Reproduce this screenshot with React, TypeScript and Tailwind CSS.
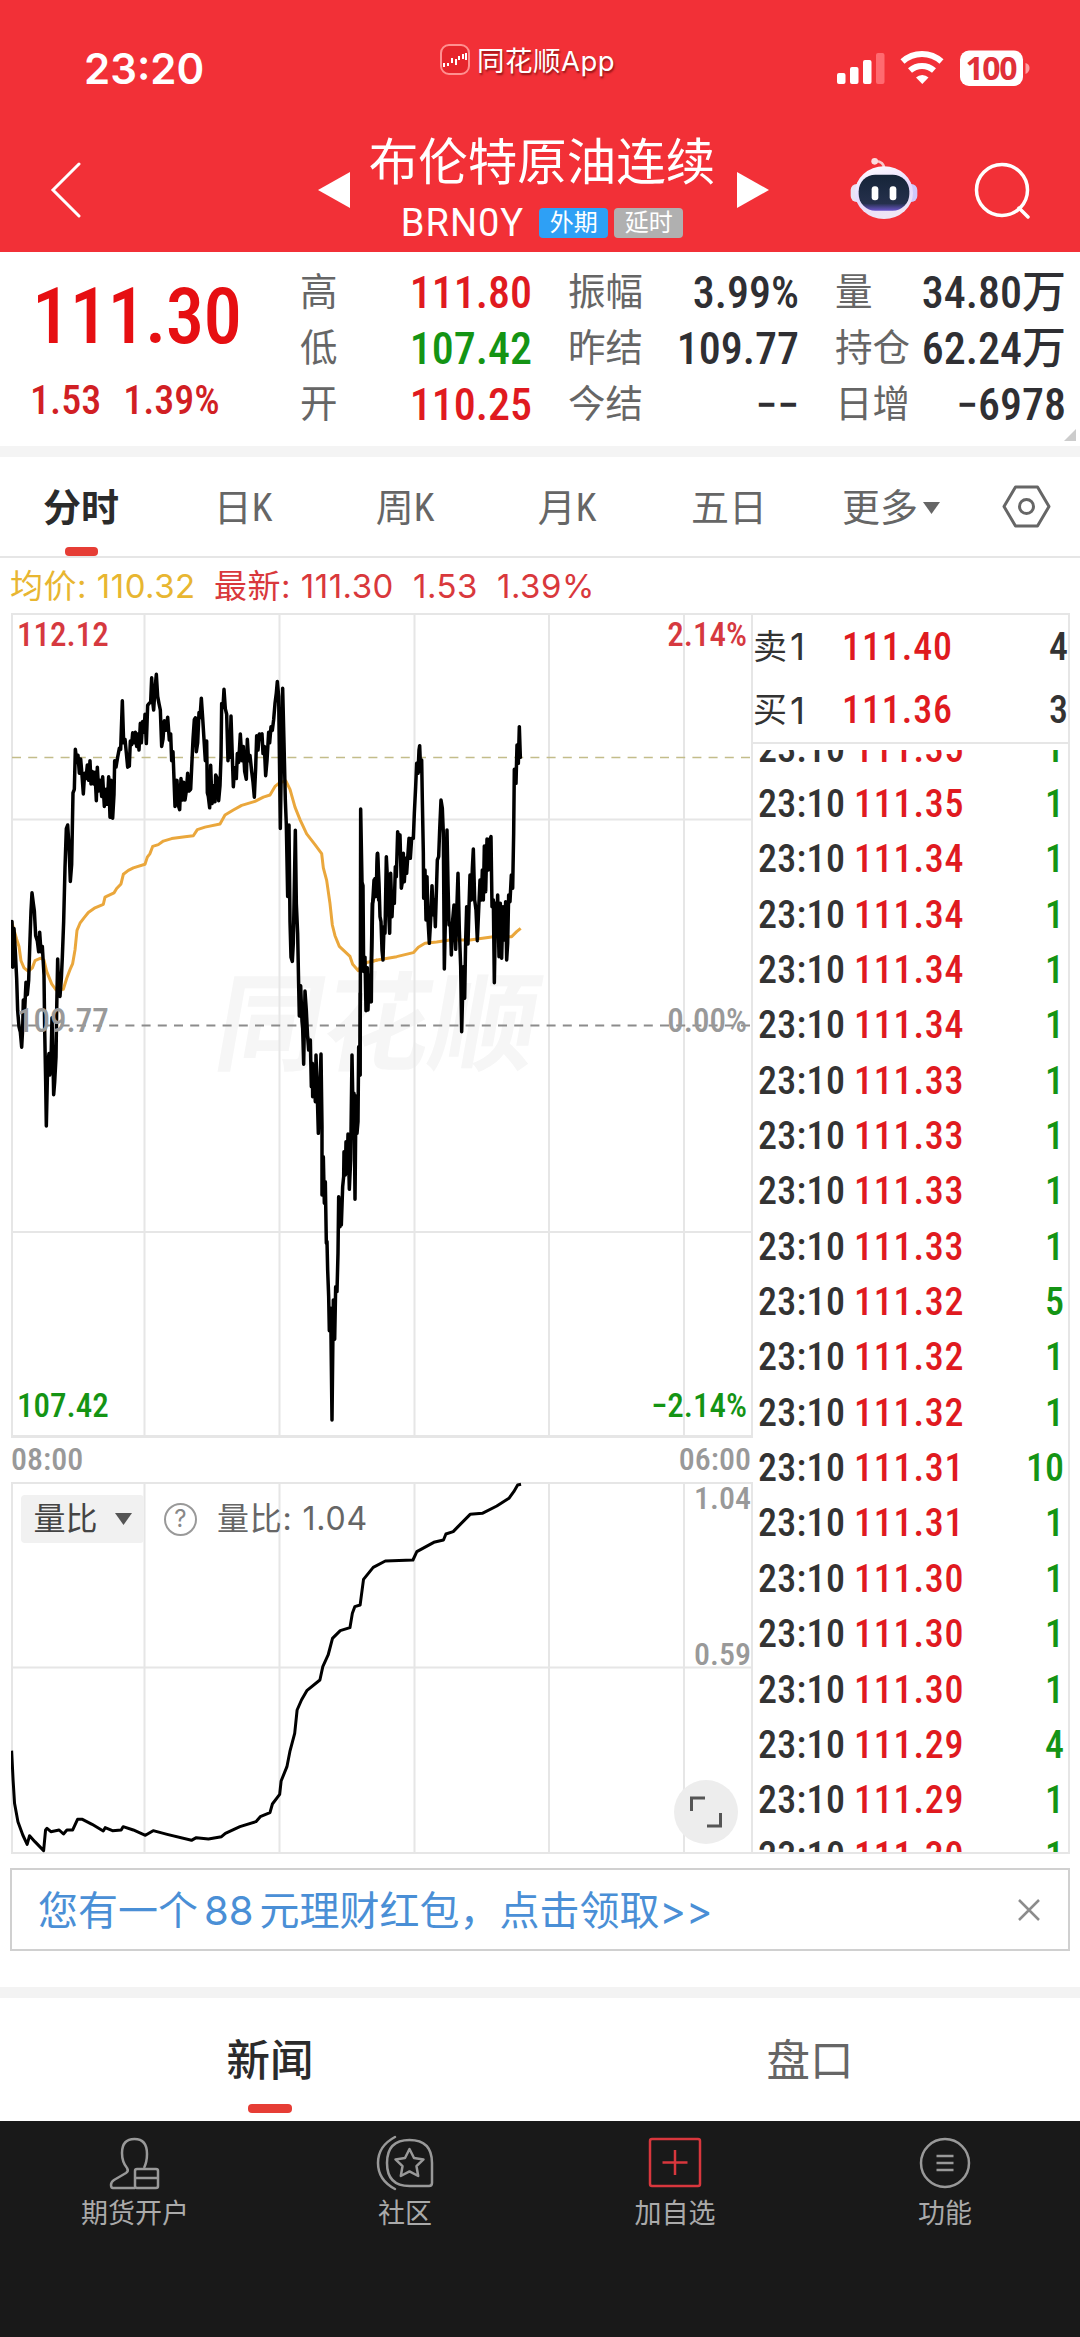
import { Fragment } from "react";

const STATS = [
	[
		["高", "111.80", "text-[#e01a1f]"],
		["低", "107.42", "text-[#149414]"],
		["开", "110.25", "text-[#e01a1f]"],
	],
	[
		["振幅", "3.99%", "text-[#2f2f33]"],
		["昨结", "109.77", "text-[#2f2f33]"],
		["今结", "−−", "text-[#2f2f33]"],
	],
	[
		["量", "34.80万", "text-[#2f2f33]"],
		["持仓", "62.24万", "text-[#2f2f33]"],
		["日增", "−6978", "text-[#2f2f33]"],
	],
];

const PERIODS = ["分时", "日K", "周K", "月K", "五日", "更多"];

const TICKS: [string, number][] = [
	["111.35", 1],
	["111.35", 1],
	["111.34", 1],
	["111.34", 1],
	["111.34", 1],
	["111.34", 1],
	["111.33", 1],
	["111.33", 1],
	["111.33", 1],
	["111.33", 1],
	["111.32", 5],
	["111.32", 1],
	["111.32", 1],
	["111.31", 10],
	["111.31", 1],
	["111.30", 1],
	["111.30", 1],
	["111.30", 1],
	["111.29", 4],
	["111.29", 1],
	["111.30", 1],
];

// each part of the session has its own origin and scale
const PRICE = [
	{
		transform: "translate(0 600) scale(0.33333 0.35714)",
		points:
			"36,900 38,1028 42,920 46,985 50,1060 53,1150 57,1195 61,1210 65,1252 68,1200 70,1120 74,1150 78,1070 82,1105 86,1065 90,950 93,870 96,820 100,850 103,870 107,940 112,955 116,985 119,930 123,985 127,970 132,1050 134,1200 137,1350 139,1473 143,1300 147,1270 149,1330 153,1290 156,1170 159,1290 161,1385 164,1350 168,1280 170,1150 173,1005 176,1090 180,1110 184,1060 187,1000 191,900 195,750 199,640 203,630 207,690 211,788 215,740 219,540 223,530 226,418 231,455 234,435 238,485 242,445 246,490 250,543 254,485 258,500 262,462 266,505 270,450 273,515 277,480 281,515 285,482 289,562 292,468 296,535 301,505 305,550 308,495 313,578 318,530 322,572 326,495 330,608 333,505 338,611 342,545 344,450 348,468 353,440 358,415 362,418 367,282 371,400 375,390 379,428 383,468 388,465 391,395 395,405 398,372 402,400 406,370 410,410 413,375 417,420 421,345 424,400 428,340 432,370 435,320 439,402 443,295 447,290 452,285 455,218 458,285 461,308 465,250 469,208 473,270 477,290 481,308 485,410 489,390 493,338 498,365 503,328 508,392 512,375 515,450 519,425 522,500 525,578 528,520 531,505 535,575 539,587 543,500 547,560 551,510 555,560 559,535 563,485 567,535 572,530 575,470 579,390 583,335 586,330 589,425 593,400 597,315 600,330 604,275 608,330 612,390 616,450 620,395 622,540 625,550 629,582 632,463 636,570 640,520 645,565 647,490 652,500 656,562 660,520 663,440 665,290 669,300 672,250 676,305 680,320 684,450 687,395 690,440 693,325 697,440 700,523 704,470 709,500 712,430 716,455 721,375 726,450 730,410 734,480 739,502 742,390 746,450 750,435 755,480 759,510 763,552 767,470 770,380 774,420 778,375 782,378 786,375 789,430 793,410 797,492 801,450 806,370 809,400 813,355 817,365 821,335 825,290 829,260 832,228 836,270 841,640 845,400 848,247 852,400 856,560 859,630 863,830 867,630 870,900 873,1000 877,1012 880,960 886,645 889,850 893,935 896,1080 898,1165 902,1080 906,1180 908,1200 911,1300 915,1095 919,1150 923,1225",
	},
	{
		transform: "translate(200 960) scale(0.33333)",
		points:
			"323,232 326,270 331,240 334,380 337,310 338,410 342,350 346,425 348,285 352,410 355,520 359,400 363,282 366,500 366,705 370,590 373,730 376,665 379,850 381,845 383,930 386,1010 388,1112 392,1045 396,1380 400,1020 404,1138 407,980 411,995 414,880 416,710 420,800 422,720 424,795 428,680 431,650 432,575 436,645 438,545 441,640 444,522 448,688 452,600 456,285 460,500 462,400 465,718 468,408 471,520 474,485 476,260 480,345 481,100",
	},
	{
		transform: "translate(0 600) scale(0.33333 0.35714)",
		points:
			"1080,1330 1081,1100 1082,585 1086,790 1089,800 1091,1040 1095,1000 1098,1150 1102,1030 1104,1148 1107,1050 1112,1125 1114,1000 1117,850 1122,830 1125,780 1128,830 1132,710 1136,840",
	},
	{
		transform: "translate(370 600) scale(0.33333)",
		points:
			"4,1205 5,1080 8,910 12,840 16,880 20,835 23,760 27,850 30,950 33,965 36,1050 39,1080 42,980 45,1000 49,770 53,850 56,940 59,1000 62,820 66,950 69,880 73,910 76,800 79,830 83,695 87,720 90,705 94,865 98,840 100,760 103,845 107,775 110,820 114,760 117,715 121,775 125,715 130,715 133,640 137,560 140,490 144,520 147,450 149,437 152,515 155,480 157,600 160,760 161,895 165,810 168,960 171,830 174,960 178,1030 182,960 186,857 190,945 193,900 196,980 199,880 202,780 206,770 209,690 213,600 217,625 220,700 223,1107 227,920 231,690 234,850 237,975 241,970 244,1065 248,960 252,915 257,1048 260,940 264,820 268,990 272,1100 275,1295 280,1100 284,1195 287,1020 290,920 294,1032 297,920 300,825 304,900 307,805 310,747 314,900 318,930 322,1022 326,930 330,840 334,900 337,810 340,900 343,738 347,875 351,717 355,810 359,720 363,710 366,920 370,900 373,1148 377,910 380,980 383,885 387,1070 391,910 395,1075 399,920 403,1020 407,905 410,1080 413,1030 416,885 420,905 424,825 428,865 431,700 433,508 438,550 441,435 445,490 448,380 451,472",
	},
];

const AVERAGE = [
	{
		transform: "translate(0 600) scale(0.33333 0.35714)",
		points:
			"36,905 50,950 57,970 63,1010 72,1030 85,1040 97,1030 105,1010 122,1003 132,1008 140,1040 155,1075 168,1092 190,1090 200,1060 210,1035 218,1018 225,980 231,925 240,905 252,890 265,875 285,862 310,852 315,832 342,820 350,808 363,795 370,768 385,757 400,750 435,740 442,720 450,710 458,690 475,685 490,675 515,668 555,663 580,660 592,643 615,636 660,627 675,602 700,588 725,575 765,564 790,552 810,546 825,522 840,511 858,507 870,530 885,580 900,615 920,655 945,685 965,710 970,750 980,785 990,850 997,910 1005,940 1018,970 1050,998 1058,1020 1075,1038 1085,1020 1100,1015 1132,1008",
	},
	{
		transform: "translate(370 600) scale(0.33333)",
		points: "5,1085 22,1080 80,1070 130,1058 145,1042 165,1030 200,1026 240,1020 300,1020 370,1010 425,1010 440,995 452,985",
	},
];

const VOLUME_RATIO =
	"24,1112 27,1200 30,1270 37,1325 47,1365 56,1393 61,1367 72,1385 90,1412 94,1350 97,1345 105,1355 122,1350 131,1362 138,1350 150,1350 160,1318 170,1318 190,1333 213,1353 217,1343 232,1352 250,1350 254,1340 275,1350 300,1366 316,1352 345,1363 395,1381 405,1373 430,1377 457,1370 465,1360 495,1340 528,1325 537,1310 557,1298 562,1272 577,1243 580,1203 592,1160 598,1115 608,1060 613,990 622,960 633,932 660,900 666,860 677,825 686,775 702,752 722,743 727,700 732,680 743,675 750,598 770,562 795,543 852,540 860,515 895,487 915,480 920,462 935,455 945,440 970,403 995,400 1025,378 1050,355 1060,335 1068,315 1075,313";

const GRID_X = [144.5, 279.5, 414.5, 549, 684];

function StatusBar() {
	return (
		<div className="flex h-[104px] items-start text-white">
			<div className="w-[440px] pt-[42px] pl-[84px] text-[42px] leading-[54px] font-semibold [font-family:Inter,sans-serif]">23:20</div>
			<div className="flex w-[397px] items-center gap-[7px] pt-[41px]">
				<svg className="h-[31px] w-[30px]" viewBox="0 0 30 31" fill="none">
					<rect x="1" y="1" width="28" height="29" rx="8" fill="#e6252c" stroke="#ff9090" strokeWidth="2" />
					<path d="M4 19v4M8 19v3M12 14v5M16 15v6M19 12v4M23 10v5M26 9v7" stroke="#fff" strokeWidth="2" />
				</svg>
				<span className="pt-[4px] text-[27.500px] leading-8 tracking-[0.5px] [text-shadow:1px_2px_2px_rgba(80,0,0,0.6)] [font-family:Inter,'Noto_Sans_CJK_SC',sans-serif]">同花顺App</span>
			</div>
			<svg className="mt-[48px] h-[40px] w-[200px]" viewBox="837 48 200 40">
				<rect x="837" y="73" width="8.500" height="11" rx="2" fill="#fff" />
				<rect x="850" y="67" width="8.500" height="17" rx="2" fill="#fff" />
				<rect x="863" y="60" width="8.500" height="24" rx="2" fill="#fff" />
				<rect x="876" y="53" width="8.500" height="31" rx="2" fill="#ff6a70" />
				<path d="M902.500 61.500a29 29 0 0 1 39 0" fill="none" stroke="#fff" strokeWidth="6" />
				<path d="M910 70.500a18 18 0 0 1 24 0" fill="none" stroke="#fff" strokeWidth="6" />
				<path d="M916 77.500a9 9 0 0 1 12.500 0l-6.200 6.500z" fill="#fff" />
				<rect x="960" y="50.500" width="63" height="35.500" rx="9" fill="#fff" />
				<path d="M1025.500 63q4 1 4 5t-4 6z" fill="#ff9fa2" />
				<text x="991.500" y="79.500" textAnchor="middle" className="fill-[#e03038] text-[32px] font-bold [font-family:'Noto_Sans',sans-serif]" textLength="52">
					100
				</text>
			</svg>
		</div>
	);
}

function Header() {
	return (
		<header className="h-[252px] bg-[#f23037] text-white">
			<StatusBar />
			<div className="flex h-[148px] items-center">
				<svg className="mt-6 ml-[50px] h-[56px] w-[32px]" viewBox="0 0 32 56" fill="none" stroke="#fff" strokeWidth="3" strokeLinecap="round">
					<path d="M29 2 3 28l26 26" />
				</svg>
				<svg className="mt-6 ml-[236px] h-[36px] w-[32px]" viewBox="0 0 32 36" fill="#fff">
					<path d="M0 18 32 0v36z" />
				</svg>
				<div className="ml-[17px] flex h-full w-[350px] flex-col items-center pt-[26px]">
					<h1 className="text-[49.500px] leading-[66px] font-normal whitespace-nowrap">布伦特原油连续</h1>
					<div className="mt-[5px] flex items-center">
						<span className="mr-[15px] text-[38px] leading-[44px] tracking-[1px] [font-family:Roboto,sans-serif]">BRN0Y</span>
						<span className="mr-[6px] flex h-[30px] w-[69px] items-center justify-center rounded-sm bg-[#2ea0f5] text-[24px] leading-none">外期</span>
						<span className="flex h-[30px] w-[69px] items-center justify-center rounded-sm bg-[#b0b0b0] text-[24px] leading-none">延时</span>
					</div>
				</div>
				<svg className="mt-6 ml-[20px] h-[36px] w-[32px]" viewBox="0 0 32 36" fill="#fff">
					<path d="M32 18 0 0v36z" />
				</svg>
				<svg className="mt-5 ml-[80px] h-[65px] w-[70px]" viewBox="55 378 210 195">
					<defs>
						<linearGradient id="shell" x1="0" y1="0" x2="0.3" y2="1">
							<stop offset="0" stopColor="#fff" />
							<stop offset="0.6" stopColor="#e6d9ff" />
							<stop offset="1" stopColor="#efe6f5" />
						</linearGradient>
						<linearGradient id="visor" x1="0" y1="0" x2="0" y2="1">
							<stop offset="0" stopColor="#152438" />
							<stop offset="0.8" stopColor="#25304c" />
							<stop offset="1" stopColor="#6a55c8" />
						</linearGradient>
					</defs>
					<path d="M160 415q0-20-26-22" fill="none" stroke="#f8c8cc" strokeWidth="8" />
					<circle cx="132" cy="394" r="10" fill="#fbdcdf" />
					<rect x="60" y="462" width="40" height="54" rx="18" fill="#e8e2f5" />
					<rect x="220" y="462" width="40" height="54" rx="18" fill="#cfc8fb" />
					<ellipse cx="160" cy="488" rx="87" ry="79" fill="url(#shell)" />
					<rect x="84" y="434" width="152" height="108" rx="50" fill="url(#visor)" />
					<rect x="123" y="469" width="20" height="42" rx="9" fill="#fff" />
					<rect x="177" y="469" width="20" height="42" rx="9" fill="#fff" />
				</svg>
				<svg className="mt-6 ml-[55px] h-[57px] w-[57px]" viewBox="0 0 57 57" fill="none" stroke="#fff" strokeWidth="3.5">
					<circle cx="28" cy="28" r="25.500" />
					<path d="m45 46 9 9" strokeLinecap="round" />
				</svg>
			</div>
		</header>
	);
}

function Quote() {
	return (
		<section className="relative flex h-[194px] pt-[13px]">
			<div className="w-[300px] pl-[32px] text-[#e60f12]">
				<div className="h-[100px] text-[77px] leading-[104px] font-medium tracking-[-0.8px]">111.30</div>
				<div className="flex gap-[22px] pt-[12px] text-[40px] leading-[48px] font-medium text-[#d11f24]">
					<span className="-ml-[2px]">1.53</span>
					<span>1.39%</span>
				</div>
			</div>
			<div className="grid grid-cols-[232px_231px_231px] gap-x-[36px]">
				{STATS.map((column, index) => (
					<div key={index}>
						{column.map(([label, value, color]) => (
							<div key={label} className="flex h-14 items-center justify-between whitespace-nowrap">
								<span className="text-[37.500px] leading-none text-[#666]">{label}</span>
								<span className={`text-[44px] leading-none font-medium ${color}`}>{value}</span>
							</div>
						))}
					</div>
				))}
			</div>
			<svg className="absolute right-1 bottom-[5px] size-3" viewBox="0 0 12 12" fill="#ccc">
				<path d="M12 0v12H0z" />
			</svg>
		</section>
	);
}

function PeriodTabs() {
	return (
		<nav className="flex h-[101px] border-b-2 border-[#e6e6e6] text-[38px] text-[#666]">
			{PERIODS.map((period, index) => (
				<div key={period} className={`relative flex w-[162px] items-center justify-center pt-[3px] ${index === 0 ? "font-bold text-[#2b2b2b]" : ""}`}>
					{period}
					{period === "更多" && (
						<svg className="ml-[5px] h-3 w-[17px]" viewBox="0 0 17 12" fill="#666">
							<path d="M0 0h17L8.500 12z" />
						</svg>
					)}
					{index === 0 && <span className="absolute bottom-0 h-[9px] w-[33px] rounded-[4px] bg-[#e63d35]" />}
				</div>
			))}
			<div className="flex flex-1 items-center justify-center">
				<svg className="h-[43px] w-[49px]" viewBox="0 0 49 43" fill="none" stroke="#666" strokeWidth="3">
					<path d="M13.500 2h22L47 21.500 35.500 41h-22L2 21.500z" strokeLinejoin="round" />
					<circle cx="24.500" cy="21.500" r="7" />
				</svg>
			</div>
		</nav>
	);
}

function Legend() {
	return (
		<div className="flex h-[55px] items-center pt-[2px] pl-[10px] text-[33px] tracking-[0.5px] whitespace-nowrap text-[#d9383c] [font-family:Inter,'Noto_Sans_CJK_SC',sans-serif]">
			<span className="w-[204px] text-[#e8b631]">均价: 110.32</span>
			<span className="w-[199px]">最新: 111.30</span>
			<span className="w-[84px]">1.53</span>
			<span>1.39%</span>
		</div>
	);
}

function PriceChart() {
	return (
		<svg className="block h-[825px] w-[742px]" viewBox="11 613 742 825" fill="none">
			<text x="378" y="1062" textAnchor="middle" className="origin-[378px_1026px] -skew-x-[10deg] fill-[#f6f6f6] text-[107px] font-bold">
				同花顺
			</text>
			<g stroke="#e6e6e6" strokeWidth="2">
				<path d="M11 614h742M12 613v825M752 613v825M11 819.500h741M11 1232h741" />
				{GRID_X.map((x) => (
					<path key={x} d={`M${x} 613v824`} />
				))}
				<path d="M11 1436.500h742" strokeWidth="3" />
			</g>
			<path d="M12 757.500h740" stroke="#c3bd8a" strokeWidth="1.500" strokeDasharray="9 7.200" />
			<path d="M12 1025.500h740" stroke="#8c8c8c" strokeWidth="2" strokeDasharray="9 7.200" />
			{AVERAGE.map((part, index) => (
				<g key={index} transform={part.transform}>
					<polyline points={part.points} stroke="#eaa73c" strokeWidth="3" strokeLinejoin="round" vectorEffect="non-scaling-stroke" />
				</g>
			))}
			{PRICE.map((part, index) => (
				<g key={index} transform={part.transform}>
					<polyline points={part.points} stroke="#000" strokeWidth="3.500" strokeLinejoin="round" strokeLinecap="round" vectorEffect="non-scaling-stroke" />
				</g>
			))}
			<g className="text-[33px] font-medium">
				<text x="17" y="646" className="fill-[#d6393f]">112.12</text>
				<text x="747" y="646" textAnchor="end" className="fill-[#d6393f]">2.14%</text>
				<text x="17" y="1032" className="fill-[#999]">109.77</text>
				<text x="747" y="1032" textAnchor="end" className="fill-[#999]">0.00%</text>
				<text x="17" y="1417" className="fill-[#149414]">107.42</text>
				<text x="747" y="1417" textAnchor="end" className="fill-[#149414]">−2.14%</text>
			</g>
		</svg>
	);
}

function VolumeChart() {
	return (
		<div className="relative">
			<svg className="block h-[372px] w-[742px]" viewBox="11 1482 742 372" fill="none">
				<g stroke="#e6e6e6" strokeWidth="2">
					<path d="M11 1483h742M12 1482v372M752 1482v372M11 1667.500h741M11 1853h742" />
					{GRID_X.map((x) => (
						<path key={x} d={`M${x} 1482v372`} />
					))}
				</g>
				<g transform="translate(0 1380) scale(0.48469 0.33333)">
					<polyline points={VOLUME_RATIO} stroke="#000" strokeWidth="3" strokeLinejoin="round" vectorEffect="non-scaling-stroke" />
				</g>
				<g className="fill-[#999] text-[32px] font-medium">
					<text x="751" y="1509" textAnchor="end">1.04</text>
					<text x="751" y="1665" textAnchor="end">0.59</text>
				</g>
			</svg>
			<div className="absolute top-[13px] left-[10px] flex items-center text-[#666] [font-family:Inter,'Noto_Sans_CJK_SC',sans-serif]">
				<button className="flex h-[48px] w-[123px] items-center justify-center gap-[17px] rounded-sm bg-[#f1f1f1] text-[32px] text-[#444]">
					量比
					<svg className="h-3 w-[17px]" viewBox="0 0 17 12" fill="#555">
						<path d="M0 0h17L8.500 12z" />
					</svg>
				</button>
				<span className="mx-5 flex size-[33px] items-center justify-center rounded-full border-2 border-[#999] text-[24px] leading-none text-[#888]">?</span>
				<span className="text-[32px] leading-[48px] tracking-[0.8px]">量比: 1.04</span>
			</div>
			<div className="absolute right-[15px] bottom-[10px] flex size-16 items-center justify-center rounded-full bg-[#ededed]">
				<svg className="size-8" viewBox="0 0 32 32" fill="none" stroke="#555" strokeWidth="3">
					<path d="M1.500 15V2H15M30.500 17v13H17" />
				</svg>
			</div>
		</div>
	);
}

function OrderPanel() {
	return (
		<aside className="flex h-[1241px] w-[317px] flex-col border-2 border-l-0 border-[#e6e6e6] text-[38px] font-medium">
			{[
				["卖", "111.40", "4"],
				["买", "111.36", "3"],
			].map(([side, price, amount]) => (
				<div key={side} className="flex h-[63.500px] shrink-0 items-center leading-none text-[#333]">
					<span className="flex w-[89px] items-center gap-[3px] text-[34px] font-normal [font-family:Inter,'Noto_Sans_CJK_SC',sans-serif]">
						{side}
						<span className="text-[37px]">1</span>
					</span>
					<span className="flex-1 tracking-[0.9px] text-[#e01a1f]">{price}</span>
					<span>{amount}</span>
				</div>
			))}
			<div className="border-t-2 border-[#e6e6e6]" />
			<div className="mt-[6px] overflow-hidden">
				<div className="-mt-[29px] grid auto-rows-[55.350px] grid-cols-[94px_1fr_auto] items-center pr-[4px] pl-[5px] leading-none">
					{TICKS.map(([price, amount], index) => (
						<Fragment key={index}>
							<span className="tracking-[0.3px] text-[#333]">23:10</span>
							<span className="pl-[2px] tracking-[0.8px] text-[#e01a1f]">{price}</span>
							<span className="text-right text-[#149414]">{amount}</span>
						</Fragment>
					))}
				</div>
			</div>
		</aside>
	);
}

const NAV = [
	{
		label: "期货开户",
		icon: (
			<svg className="h-[54px] w-[54px]" viewBox="0 0 54 54" fill="none" stroke="#999" strokeWidth="2.500" strokeLinejoin="round">
				<path d="M27 52H5q-2 0-2-3 0-3 3-5l12-7q3-2 1-5-5-6-5-15Q14 3 26.500 3 39 3 39 18q0 8-3 14" />
				<rect x="27" y="33" width="23" height="19" rx="2" />
				<path d="M27 42h23" />
			</svg>
		),
	},
	{
		label: "社区",
		icon: (
			<svg className="h-[56px] w-[58px]" viewBox="0 0 58 56" fill="none" stroke="#999" strokeWidth="2.500" strokeLinejoin="round">
				<path d="M19 2Q2 11 2 28t17 26" strokeLinecap="round" />
				<path d="M56 48V28Q56 5 33.500 5T11 28t22.500 23H53q3 0 3-3z" />
				<path d="m33.500 14 4.500 9 9.500 1.400-7 6.800 1.700 9.800-8.700-4.600-8.700 4.600 1.700-9.800-7-6.800L29 23z" />
			</svg>
		),
	},
	{
		label: "加自选",
		icon: (
			<svg className="h-[54px] w-[54px]" viewBox="0 0 54 54" fill="none" stroke="#d8373d" strokeWidth="2.500">
				<rect x="2" y="3" width="50" height="47" rx="2" />
				<path d="M27 14v25M14.500 26.500h25" />
			</svg>
		),
	},
	{
		label: "功能",
		icon: (
			<svg className="h-[54px] w-[54px]" viewBox="0 0 54 54" fill="none" stroke="#999" strokeWidth="2.500">
				<circle cx="27" cy="27" r="24" />
				<path d="M18.500 20h17M18.500 27h17M18.500 34h17" />
			</svg>
		),
	},
];

export default function App() {
	return (
		<div className="h-[2337px] w-[1080px] overflow-hidden bg-white [font-family:'Roboto_Condensed','Noto_Sans_CJK_SC',sans-serif]">
			<Header />
			<Quote />
			<div className="h-[11px] bg-[#f4f4f4]" />
			<PeriodTabs />
			<Legend />
			<main className="flex pl-[11px]">
				<div className="w-[742px]">
					<PriceChart />
					<div className="flex h-[44px] items-center justify-between pb-[2px] text-[32px] leading-none font-medium text-[#999]">
						<span>08:00</span>
						<span className="pr-[2px]">06:00</span>
					</div>
					<VolumeChart />
				</div>
				<OrderPanel />
			</main>
			<div className="mx-[10px] mt-[14px] flex h-[83px] items-center justify-between border-2 border-[#d0d0d0] pr-[28px] pl-[26px] text-[40px] text-[#4a8fd6]">
				<span className="pt-[2px] [font-family:Inter,'Noto_Sans_CJK_SC',sans-serif]">
					您有一个<span className="mx-[6px]">88</span>元理财红包，点击领取&gt;&gt;
				</span>
				<svg className="size-[22px]" viewBox="0 0 22 22" stroke="#8c8c8c" strokeWidth="2.500">
					<path d="m1 1 20 20M21 1 1 21" />
				</svg>
			</div>
			<div className="mt-[36px] h-[11px] bg-[#f3f3f3]" />
			<div className="flex h-[123px] text-[43.500px] leading-[128px]">
				<div className="relative w-1/2 text-center font-medium text-[#2b2b2b]">
					新闻
					<span className="absolute bottom-[8px] left-1/2 h-[9px] w-[44px] -translate-x-1/2 rounded-[4px] bg-[#e63d35]" />
				</div>
				<div className="w-1/2 text-center text-[#666]">盘口</div>
			</div>
			<footer className="grid h-[216px] grid-cols-4 bg-[#191919] pt-[14px] text-[27px] text-[#aaa]">
				{NAV.map((item) => (
					<div key={item.label} className="flex flex-col items-center">
						<div className="flex h-14 items-center">{item.icon}</div>
						<span className="mt-[5px] leading-9">{item.label}</span>
					</div>
				))}
			</footer>
		</div>
	);
}
